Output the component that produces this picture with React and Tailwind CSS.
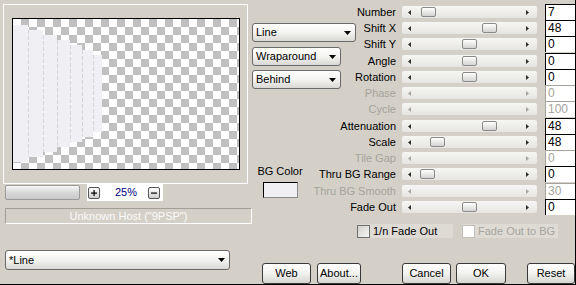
import React from 'react';

const sliders = [
  { label: 'Number', value: '7', pos: 19 },
  { label: 'Shift X', value: '48', pos: 80 },
  { label: 'Shift Y', value: '0', pos: 60 },
  { label: 'Angle', value: '0', pos: 60 },
  { label: 'Rotation', value: '0', pos: 60 },
  { label: 'Phase', value: '0', disabled: true },
  { label: 'Cycle', value: '100', disabled: true },
  { label: 'Attenuation', value: '48', pos: 80 },
  { label: 'Scale', value: '48', pos: 28 },
  { label: 'Tile Gap', value: '0', disabled: true },
  { label: 'Thru BG Range', value: '0', pos: 18 },
  { label: 'Thru BG Smooth', value: '30', disabled: true },
  { label: 'Fade Out', value: '0', pos: 60 },
];

// preview stripes: [x0, x1, top, bottom]
const stripes = [
  [0, 15, 6, 143],
  [15, 30, 11, 138],
  [30, 44, 16, 133],
  [44, 57, 21, 128],
  [57, 69, 26, 123],
  [69, 80, 31, 118],
  [80, 89, 36, 113],
];

function DownArrow() {
  return (
    <svg width="7" height="4" className="block shrink-0">
      <polygon points="0,0 7,0 3.5,4" fill="#000" />
    </svg>
  );
}

function Combo({ label, className }) {
  return (
    <div className={`flex items-center justify-between rounded-[3px] border border-[#6a6a6a] bg-linear-to-b from-white via-[#f3f3f1] to-[#d9d8d4] pl-[3px] pr-[4px] ${className}`}>
      <span className="whitespace-nowrap">{label}</span>
      <DownArrow />
    </div>
  );
}

function Button({ label, className }) {
  return (
    <div className={`flex h-[21px] items-center justify-center rounded-[3px] border border-[#3a3a3a] bg-linear-to-b from-white via-[#f2f2f0] to-[#d6d5d0] ${className}`}>
      {label}
    </div>
  );
}

function SliderRow({ label, value, pos, disabled, extra }) {
  const arrow = disabled ? '#a8a6a0' : '#2e2e2e';
  return (
    <div className={`flex h-[16px] items-center ${extra ? 'mt-[1px]' : ''}`}>
      <div className={`flex h-[16px] w-[40px] justify-end whitespace-nowrap leading-[16px] ${disabled ? 'text-[#a6a39c]' : 'text-black'}`}>
        {label}
      </div>
      <div className="relative ml-[6px] flex h-[12px] w-[135px] items-center justify-between rounded-[2px] bg-linear-to-b from-[#f6f6f4] to-[#e6e5e1] pl-[6px] pr-[8px]">
        <svg width="3" height="5" className="block">
          <polygon points="3,0 3,5 0,2.5" fill={arrow} />
        </svg>
        <svg width="3" height="5" className="block">
          <polygon points="0,0 0,5 3,2.5" fill={arrow} />
        </svg>
        {!disabled && (
          <div
            className="absolute top-[1px] h-[10px] w-[15px] rounded-[2px] border border-[#8a8a8a] bg-linear-to-b from-white to-[#d4d4d2]"
            style={{ left: pos }}
          />
        )}
      </div>
      <div
        className={`ml-[8px] h-[16px] w-[30px] border-l border-t bg-white pl-[2px] text-[12px] leading-[15px] ${
          disabled ? 'border-[#a6a39c] text-[#a6a39c]' : 'border-black text-black'
        }`}
      >
        {value}
      </div>
    </div>
  );
}

function SmallButton({ minus }) {
  return (
    <div className="flex h-[12px] w-[12px] items-center justify-center rounded-[2px] border border-[#555] bg-linear-to-b from-white to-[#cfcfcf]">
      <svg width="6" height="6" className="block">
        <rect x="0" y="2.5" width="6" height="1.2" fill="#000" />
        {!minus && <rect x="2.5" y="0" width="1.2" height="6" fill="#000" />}
      </svg>
    </div>
  );
}

export default function App() {
  return (
    <div className="flex h-[285px] w-[576px] overflow-hidden border-b border-r border-black bg-[#d4d0c8] font-['Liberation_Sans',Arial,sans-serif] text-[11px] leading-[13px] text-black">
      {/* Left column */}
      <div className="flex w-[252px] shrink-0 flex-col">
        <div className="ml-[3px] mt-[4px] h-[180px] w-[245px] border border-white pl-[8px] pt-[13px]">
          <div className="h-[152px] w-[228px] border border-black bg-white">
            <svg width="226" height="150" className="block">
              <defs>
                <pattern id="checker" width="16" height="16" patternUnits="userSpaceOnUse">
                  <rect width="16" height="16" fill="#fff" />
                  <rect x="8" y="0" width="8" height="8" fill="#c0c0c0" />
                  <rect x="0" y="8" width="8" height="8" fill="#c0c0c0" />
                </pattern>
              </defs>
              <rect width="226" height="150" fill="url(#checker)" />
              {stripes.map(([x0, x1, t, b], i) => (
                <g key={i}>
                  <rect x={x0} y={t} width={x1 - x0} height={b - t} fill="#f0eff4" />
                  {i > 0 && (
                    <line x1={x0 + 0.5} y1={t} x2={x0 + 0.5} y2={b} stroke="#d6d5db" strokeDasharray="4 2" />
                  )}
                </g>
              ))}
            </svg>
          </div>
        </div>

        <div className="flex h-[17px] items-start">
          <div className="ml-[5px] mt-[1px] h-[15px] w-[75px] rounded-[2px] border border-[#9a9a9a] bg-linear-to-b from-[#f6f6f6] via-[#d9d9d9] to-[#c9c9c9]" />
          <div className="ml-[7px] flex h-[17px] w-[76px] items-center bg-white">
            <div className="ml-[1px]">
              <SmallButton />
            </div>
            <span className="ml-[15px] text-[#000080]">25%</span>
            <div className="ml-auto mr-[3px]">
              <SmallButton minus />
            </div>
          </div>
        </div>

        <div className="ml-[5px] mt-[7px] h-[16px] w-[247px] border-b border-l border-r border-t border-b-white border-l-[#a19e97] border-r-white border-t-[#a19e97] text-center leading-[14px] text-[#fbfaf8]">
          Unknown Host ("9PSP")
        </div>

        <Combo label="*Line" className="ml-[5px] mt-[26px] h-[20px] w-[225px]" />
      </div>

      {/* Right part */}
      <div className="flex w-[323px] flex-col">
        <div className="flex h-[263px]">
          <div className="flex w-[104px] shrink-0 flex-col">
            <Combo label="Line" className="mt-[23px] h-[19px] w-[104px]" />
            <Combo label="Wraparound" className="mt-[5px] h-[19px] w-[89px]" />
            <Combo label="Behind" className="mt-[4px] h-[19px] w-[89px]" />
            <div className="ml-[6px] mt-[76px] flex w-[44px] flex-col items-center">
              <span className="whitespace-nowrap">BG Color</span>
              <div className="mt-[4px] h-[16px] w-[35px] border-b border-l border-r border-t border-b-[#8a8a8a] border-l-black border-r-[#8a8a8a] border-t-black bg-[#f0eff4]" />
            </div>
          </div>

          <div className="flex w-[219px] flex-col pt-[4px]">
            {sliders.map((s, i) => (
              <SliderRow key={s.label} {...s} extra={i % 4 === 3} />
            ))}
            <div className="mt-[9px] flex h-[14px] items-center leading-[14px]">
              <div className="ml-[1px] flex h-[14px] w-[96px] items-center bg-[#dedbd5]">
                <div className="h-[13px] w-[13px] border border-[#6e6e6e] bg-linear-to-br from-[#d2d1cc] to-[#f6f6f4]" />
                <span className="ml-[3px] whitespace-nowrap">1/n Fade Out</span>
              </div>
              <div className="ml-[9px] flex h-[14px] w-[96px] items-center bg-[#dedbd5]">
                <div className="h-[13px] w-[13px] border border-[#c2bfb8] bg-white" />
                <span className="ml-[3px] whitespace-nowrap text-[#a6a39c]">Fade Out to BG</span>
              </div>
            </div>
          </div>
        </div>

        <div className="flex h-[21px]">
          <Button label="Web" className="ml-[10px] w-[49px]" />
          <Button label="About..." className="ml-[6px] w-[44px]" />
          <Button label="Cancel" className="ml-[41px] w-[49px]" />
          <Button label="OK" className="ml-[5px] w-[50px]" />
          <Button label="Reset" className="ml-[21px] w-[48px]" />
        </div>
      </div>
    </div>
  );
}
